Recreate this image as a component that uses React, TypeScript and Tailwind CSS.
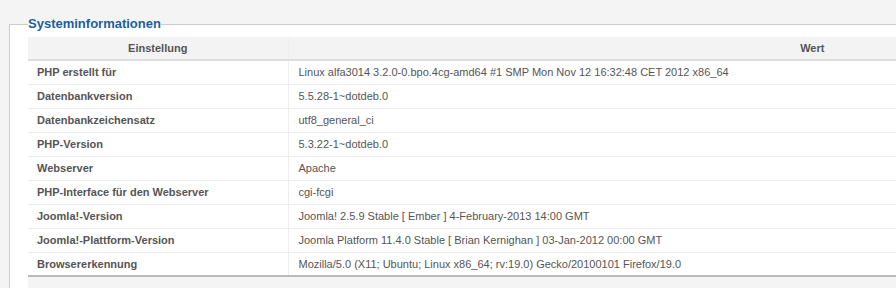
const rows: [string, string][] = [
  ['PHP erstellt für', 'Linux alfa3014 3.2.0-0.bpo.4cg-amd64 #1 SMP Mon Nov 12 16:32:48 CET 2012 x86_64'],
  ['Datenbankversion', '5.5.28-1~dotdeb.0'],
  ['Datenbankzeichensatz', 'utf8_general_ci'],
  ['PHP-Version', '5.3.22-1~dotdeb.0'],
  ['Webserver', 'Apache'],
  ['PHP-Interface für den Webserver', 'cgi-fcgi'],
  ['Joomla!-Version', 'Joomla! 2.5.9 Stable [ Ember ] 4-February-2013 14:00 GMT'],
  ['Joomla!-Plattform-Version', 'Joomla Platform 11.4.0 Stable [ Brian Kernighan ] 03-Jan-2012 00:00 GMT'],
  ['Browsererkennung', 'Mozilla/5.0 (X11; Ubuntu; Linux x86_64; rv:19.0) Gecko/20100101 Firefox/19.0'],
];

export default function App() {
  return (
    <div className="h-[288px] w-[896px] overflow-hidden bg-[#f4f4f4] font-['Liberation_Sans',Arial,sans-serif] text-[11px] text-[#555]">
      <div className="pl-[9px] pt-[16px]">
        <fieldset className="w-[1400px] border border-[#cccccc] bg-white pl-[18px]">
          <legend className="text-[13px] leading-[16px] font-bold text-[#1a5f9e]">Systeminformationen</legend>
          <div className="pt-[5px]">
            <table className="w-[1308px] border-collapse">
              <thead>
                <tr className="h-[23px] border-b-2 border-[#dddddd] bg-[#f3f3f3]">
                  <th className="w-[260px] border-r border-[#eeeeee] font-bold">Einstellung</th>
                  <th className="font-bold">Wert</th>
                </tr>
              </thead>
              <tbody>
                {rows.map(([label, value], i) => (
                  <tr
                    key={label}
                    className={`h-[24px] ${i === rows.length - 1 ? 'border-b-2 border-[#bbbbbb]' : 'border-b border-[#eeeeee]'}`}
                  >
                    <td className="border-r border-[#eeeeee] pl-[9px] font-bold">{label}</td>
                    <td className="pl-[10px]">{value}</td>
                  </tr>
                ))}
              </tbody>
            </table>
            <div className="h-[20px] w-[1308px] bg-[#f4f4f4]" />
          </div>
        </fieldset>
      </div>
    </div>
  );
}
